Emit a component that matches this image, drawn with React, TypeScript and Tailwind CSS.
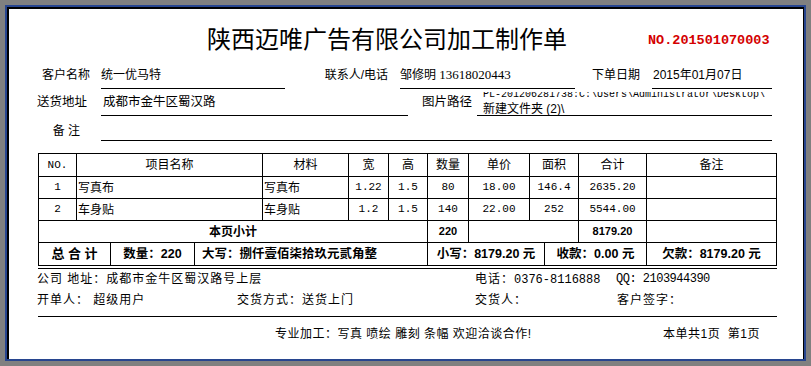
import React from 'react';

const sans = "font-['Liberation_Sans','Noto_Sans_CJK_SC',sans-serif]";
const mono = "font-['Liberation_Mono','Noto_Sans_CJK_SC',monospace]";

const items = [
  { no: '1', name: '写真布', material: '写真布', w: '1.22', h: '1.5', qty: '80', price: '18.00', area: '146.4', total: '2635.20' },
  { no: '2', name: '车身贴', material: '车身贴', w: '1.2', h: '1.5', qty: '140', price: '22.00', area: '252', total: '5544.00' },
];

const headers = ['项目名称', '材料', '宽', '高', '数量', '单价', '面积', '合计', '备注'];

export default function App() {
  return (
    <div className={`w-[811px] h-[366px] bg-[#808080] p-[5px] ${sans} text-black`}>
      <div className="h-full border-2 border-[#27458f]">
        <div className="h-full bg-white border-t-2 border-l-2 border-r border-black pl-[28px]">
          {/* title */}
          <div className="flex items-center pt-[19px]">
            <h1 className="ml-[170px] text-[24px] leading-[24px] whitespace-nowrap">陕西迈唯广告有限公司加工制作单</h1>
            <span className={`ml-[81px] mt-[3px] text-[13.5px] font-semibold text-[#d40000] ${mono}`}>NO.201501070003</span>
          </div>

          {/* info rows */}
          <div className="mt-[13px] flex h-[24px] text-[12px]">
            <span className="w-[53px] text-right leading-[20px]">客户名称</span>
            <div className="ml-[11px] w-[184px] border-b border-black leading-[20px]">统一优马特</div>
            <span className="w-[103px] text-right leading-[20px]">联系人/电话</span>
            <div className="ml-[12px] w-[175px] border-b border-black leading-[20px] whitespace-nowrap">
              邹修明 <span className="font-['Liberation_Serif'] text-[13px]">13618020443</span>
            </div>
            <span className="w-[65px] text-right leading-[20px]">下单日期</span>
            <div className="ml-[12px] w-[120px] border-b border-black leading-[20px] pl-px">2015年01月07日</div>
          </div>

          <div className="mt-[3px] flex h-[24px] text-[12.5px]">
            <span className="w-[50px] text-right leading-[20px]">送货地址</span>
            <div className="ml-[14px] w-[307px] border-b border-black leading-[20px] pl-[2px]">成都市金牛区蜀汉路</div>
            <span className="w-[64px] text-right leading-[20px]">图片路径</span>
            <div className="ml-[5px] w-[295px] border-b border-black pl-[6px] flex flex-col justify-end overflow-hidden">
              <div className={`mb-[3px] text-[10px] leading-[10px] whitespace-nowrap ${mono}`}>
                {'PL-201206281738:C:\\Users\\Administrator\\Desktop\\'}
              </div>
              <div className="text-[12px] leading-[12px] whitespace-pre">新建文件夹 (2)\</div>
            </div>
          </div>

          <div className="mt-px flex h-[24px] text-[12px]">
            <span className="w-[43px] text-right leading-[20px] pt-[4px]">备 注</span>
            <div className="ml-[21px] w-[671px] border-b border-black" />
          </div>

          {/* item table */}
          <div className="ml-px mt-[12px] w-[739px] text-[12px]">
            <div className="grid grid-cols-[37px_185px_85px_39px_38px_40px_60px_48px_67px_129px] grid-rows-[22px_21px_21px_21px] gap-px bg-black p-px">
              <div className={`bg-white flex items-center justify-center text-[11px] ${mono}`}>NO.</div>
              {headers.map((h) => (
                <div key={h} className="bg-white flex items-center justify-center">{h}</div>
              ))}
              {items.map((it) => (
                <React.Fragment key={it.no}>
                  <div className={`bg-white flex items-center justify-center text-[11px] ${mono}`}>{it.no}</div>
                  <div className="bg-white flex items-center pl-px">{it.name}</div>
                  <div className="bg-white flex items-center pl-px">{it.material}</div>
                  {[it.w, it.h, it.qty, it.price, it.area, it.total].map((v, i) => (
                    <div key={i} className={`bg-white flex items-center justify-center text-[11px] ${mono}`}>{v}</div>
                  ))}
                  <div className="bg-white" />
                </React.Fragment>
              ))}
              <div className="col-span-5 bg-white flex items-center justify-center font-bold">本页小计</div>
              <div className="bg-white flex items-center justify-center font-bold text-[11px]">220</div>
              <div className="col-span-2 bg-white" />
              <div className="bg-white flex items-center justify-center font-bold text-[11px]">8179.20</div>
              <div className="bg-white" />
            </div>
            <div className="grid grid-cols-[71px_83px_232px_116px_101px_129px] h-[23px] gap-px bg-black px-px pb-px font-bold text-[12.5px]">
              <div className="bg-white flex items-center justify-center whitespace-pre text-[13px]">总 合 计</div>
              <div className="bg-white flex items-center justify-center">数量：220</div>
              <div className="bg-white flex items-center pl-[7px]">大写：捌仟壹佰柒拾玖元贰角整</div>
              <div className="bg-white flex items-center justify-center whitespace-pre">小写：8179.20 元</div>
              <div className="bg-white flex items-center justify-center whitespace-pre">收款：0.00 元</div>
              <div className="bg-white flex items-center justify-center whitespace-pre">欠款：8179.20 元</div>
            </div>
            <div className="mt-[2px] h-px bg-black" />
          </div>

          {/* footer info */}
          <div className="flex text-[12px] leading-[20px] whitespace-pre">
            <span className="w-[438px] tracking-[1px]">公司 地址：成都市金牛区蜀汉路号上层</span>
            <span className="w-[141px]">
              <span className="tracking-[1px]">电话：</span>
              <span className={mono}>0376-8116888</span>
            </span>
            <span className={`tracking-[-0.5px] ${mono}`}>QQ: 2103944390</span>
          </div>
          <div className="flex text-[12px] leading-[20px] tracking-[1px] whitespace-pre">
            <span className="w-[200px]">开单人： 超级用户</span>
            <span className="w-[238px]">交货方式：送货上门</span>
            <span className="w-[142px]">交货人：</span>
            <span>客户签字：</span>
          </div>
          <div className="ml-px mt-[6px] w-[739px] h-px bg-black" />
          <div className="mt-[7px] flex text-[12px] leading-[20px] whitespace-pre tracking-[0.5px]">
            <span className="ml-[238px] w-[388px]">专业加工：写真 喷绘 雕刻 条幅 欢迎洽谈合作!</span>
            <span>本单共1页  第1页</span>
          </div>
        </div>
      </div>
    </div>
  );
}
